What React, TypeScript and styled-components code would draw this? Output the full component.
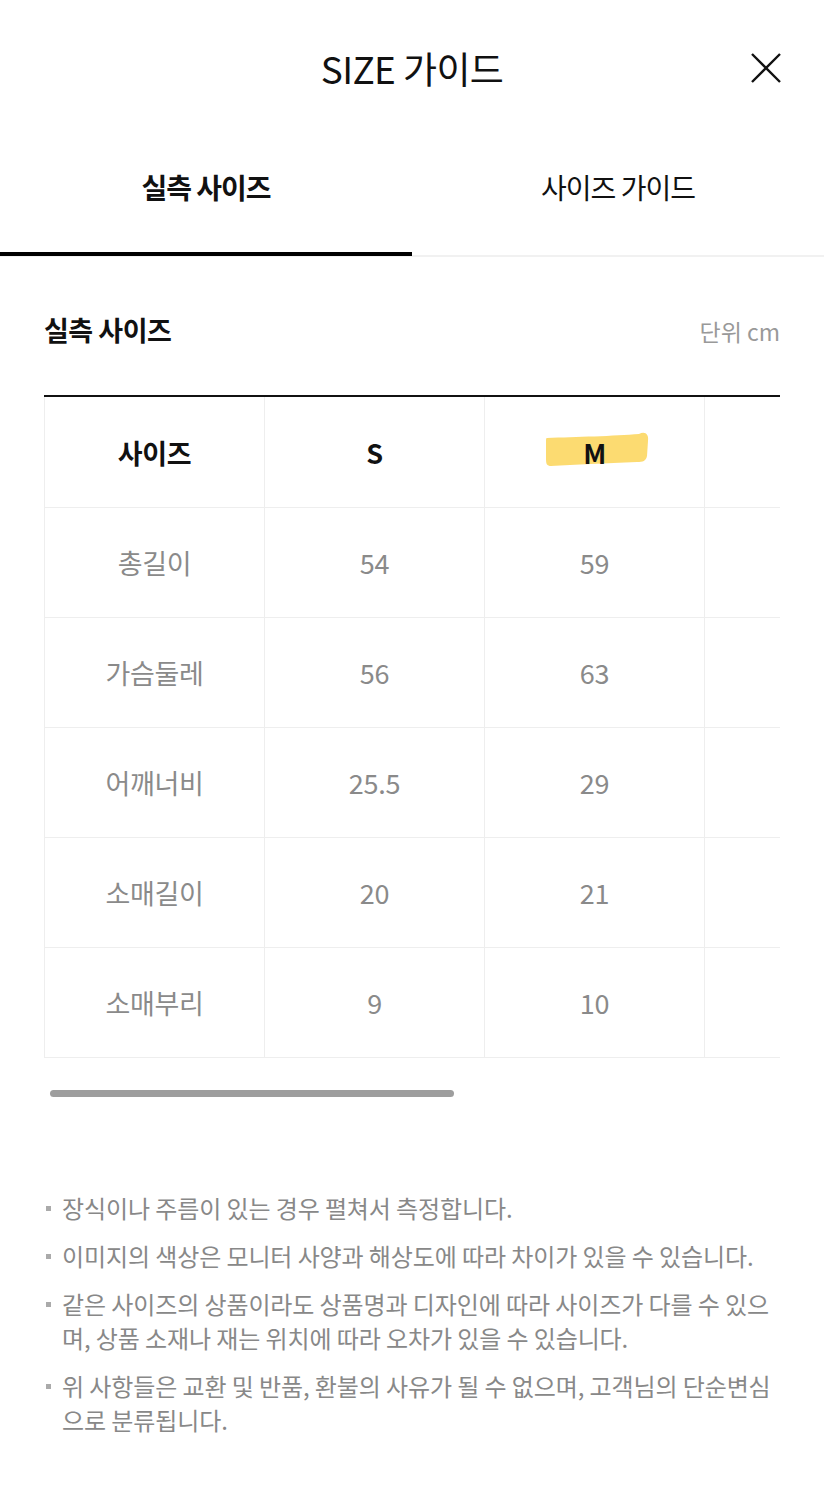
import styled, { createGlobalStyle } from "styled-components";

const SIZES = ["S", "M", ""];
const HIGHLIGHT = "M";

const ROWS = [
  { label: "총길이", values: ["54", "59", ""] },
  { label: "가슴둘레", values: ["56", "63", ""] },
  { label: "어깨너비", values: ["25.5", "29", ""] },
  { label: "소매길이", values: ["20", "21", ""] },
  { label: "소매부리", values: ["9", "10", ""] },
];

const NOTES = [
  "장식이나 주름이 있는 경우 펼쳐서 측정합니다.",
  "이미지의 색상은 모니터 사양과 해상도에 따라 차이가 있을 수 있습니다.",
  "같은 사이즈의 상품이라도 상품명과 디자인에 따라 사이즈가 다를 수 있으며, 상품 소재나 재는 위치에 따라 오차가 있을 수 있습니다.",
  "위 사항들은 교환 및 반품, 환불의 사유가 될 수 없으며, 고객님의 단순변심으로 분류됩니다.",
];

const GlobalStyle = createGlobalStyle`
  body {
    margin: 0;
    background: #fff;
    font-family: "Noto Sans CJK KR", "Noto Sans", sans-serif;
    color: #111;
  }
`;

function CloseIcon() {
  return (
    <svg width="32" height="32" viewBox="0 0 32 32" fill="none">
      <path d="M2 2L30 30M30 2L2 30" stroke="#111" strokeWidth="2.4" />
    </svg>
  );
}

function Highlight() {
  return (
    <Brush width="104" height="38" viewBox="0 0 104 38">
      <path
        d="M2 7 C30 6 70 5 94 3 C100 0 104 3 103 10 L102 25 C101 30 98 31 92 31 C60 32 30 34 6 35 C2 35 1 33 1 28 L1 10 C1 8 1 7 2 7 Z"
        fill="#fcd865"
        opacity="0.92"
      />
    </Brush>
  );
}

function App() {
  return (
    <Page>
      <GlobalStyle />
      <Header>
        <Title>SIZE 가이드</Title>
        <CloseButton aria-label="닫기">
          <CloseIcon />
        </CloseButton>
      </Header>
      <Tabs>
        <Tab active>실측 사이즈</Tab>
        <Tab>사이즈 가이드</Tab>
      </Tabs>
      <Section>
        <SectionHead>
          <SectionTitle>실측 사이즈</SectionTitle>
          <Unit>단위 cm</Unit>
        </SectionHead>
        <TableScroll>
          <Table>
            <thead>
              <tr>
                <HeadCell>사이즈</HeadCell>
                {SIZES.map((s, i) => (
                  <HeadCell key={i}>
                    {s === HIGHLIGHT ? (
                      <Marked>
                        <Highlight />
                        <span>{s}</span>
                      </Marked>
                    ) : (
                      s
                    )}
                  </HeadCell>
                ))}
              </tr>
            </thead>
            <tbody>
              {ROWS.map((row) => (
                <tr key={row.label}>
                  <Cell>{row.label}</Cell>
                  {row.values.map((v, i) => (
                    <Cell key={i}>{v}</Cell>
                  ))}
                </tr>
              ))}
            </tbody>
          </Table>
        </TableScroll>
        <ScrollTrack>
          <ScrollThumb />
        </ScrollTrack>
        <Notes>
          {NOTES.map((n) => (
            <Note key={n}>{n}</Note>
          ))}
        </Notes>
      </Section>
    </Page>
  );
}

const Page = styled.div`
  width: 824px;
  min-height: 1500px;
  background: #fff;
`;

const Header = styled.header`
  position: relative;
  height: 136px;
  display: flex;
  align-items: center;
  justify-content: center;
`;

const Title = styled.h1`
  margin: 0;
  font-size: 37px;
  font-weight: 400;
  letter-spacing: -0.6px;
  line-height: 1;
  color: #111;
`;

const CloseButton = styled.button`
  position: absolute;
  right: 42px;
  top: 52px;
  width: 32px;
  height: 32px;
  padding: 0;
  border: 0;
  background: none;
  display: flex;
`;

const Tabs = styled.nav`
  display: flex;
  border-bottom: 2px solid #f1f1f1;
`;

const Tab = styled.div<{ active?: boolean }>`
  flex: 1;
  height: 120px;
  padding-top: 31px;
  box-sizing: border-box;
  text-align: center;
  font-size: 28px;
  line-height: 40px;
  letter-spacing: -1px;
  font-weight: ${({ active }) => (active ? 700 : 400)};
  color: #111;
  border-bottom: 4px solid ${({ active }) => (active ? "#000" : "transparent")};
  margin-bottom: -1px;
`;

const Section = styled.section`
  padding: 51px 44px 60px;
`;

const SectionHead = styled.div`
  display: flex;
  justify-content: space-between;
  align-items: baseline;
  margin-bottom: 43px;
`;

const SectionTitle = styled.h2`
  margin: 0;
  font-size: 27px;
  line-height: 44px;
  font-weight: 700;
  letter-spacing: -0.5px;
`;

const Unit = styled.span`
  font-size: 23px;
  color: #999;
  letter-spacing: 0;
`;

const TableScroll = styled.div`
  overflow: hidden;
  border-top: 2px solid #111;
`;

const Table = styled.table`
  border-collapse: collapse;
  table-layout: fixed;
`;

const HeadCell = styled.th`
  width: 219px;
  min-width: 219px;
  height: 110px;
  padding: 0;
  font-size: 27px;
  font-weight: 700;
  letter-spacing: -0.4px;
  color: #111;
  border: 1px solid #eeeeee;
  border-top: 0;
  text-align: center;
`;

const Cell = styled.td`
  width: 219px;
  height: 109px;
  padding: 0;
  font-size: 27px;
  letter-spacing: -0.3px;
  color: #8a8a8a;
  border: 1px solid #eeeeee;
  text-align: center;
`;

const Marked = styled.span`
  position: relative;
  display: inline-block;
  padding: 0 40px;
  span {
    position: relative;
  }
`;

const Brush = styled.svg`
  position: absolute;
  left: 2px;
  top: -2px;
`;

const ScrollTrack = styled.div`
  margin: 32px 0 0 6px;
  height: 7px;
`;

const ScrollThumb = styled.div`
  width: 404px;
  height: 7px;
  border-radius: 4px;
  background: #9e9e9e;
`;

const Notes = styled.ul`
  list-style: none;
  margin: 94px 0 0;
  padding: 0;
  display: flex;
  flex-direction: column;
  gap: 14px;
`;

const Note = styled.li`
  position: relative;
  padding-left: 18px;
  font-size: 24px;
  line-height: 34px;
  letter-spacing: -0.1px;
  color: #888;
  word-break: break-all;

  &::before {
    content: "";
    position: absolute;
    left: 2px;
    top: 15px;
    width: 5px;
    height: 5px;
    background: #aaa;
  }
`;

export default App;
